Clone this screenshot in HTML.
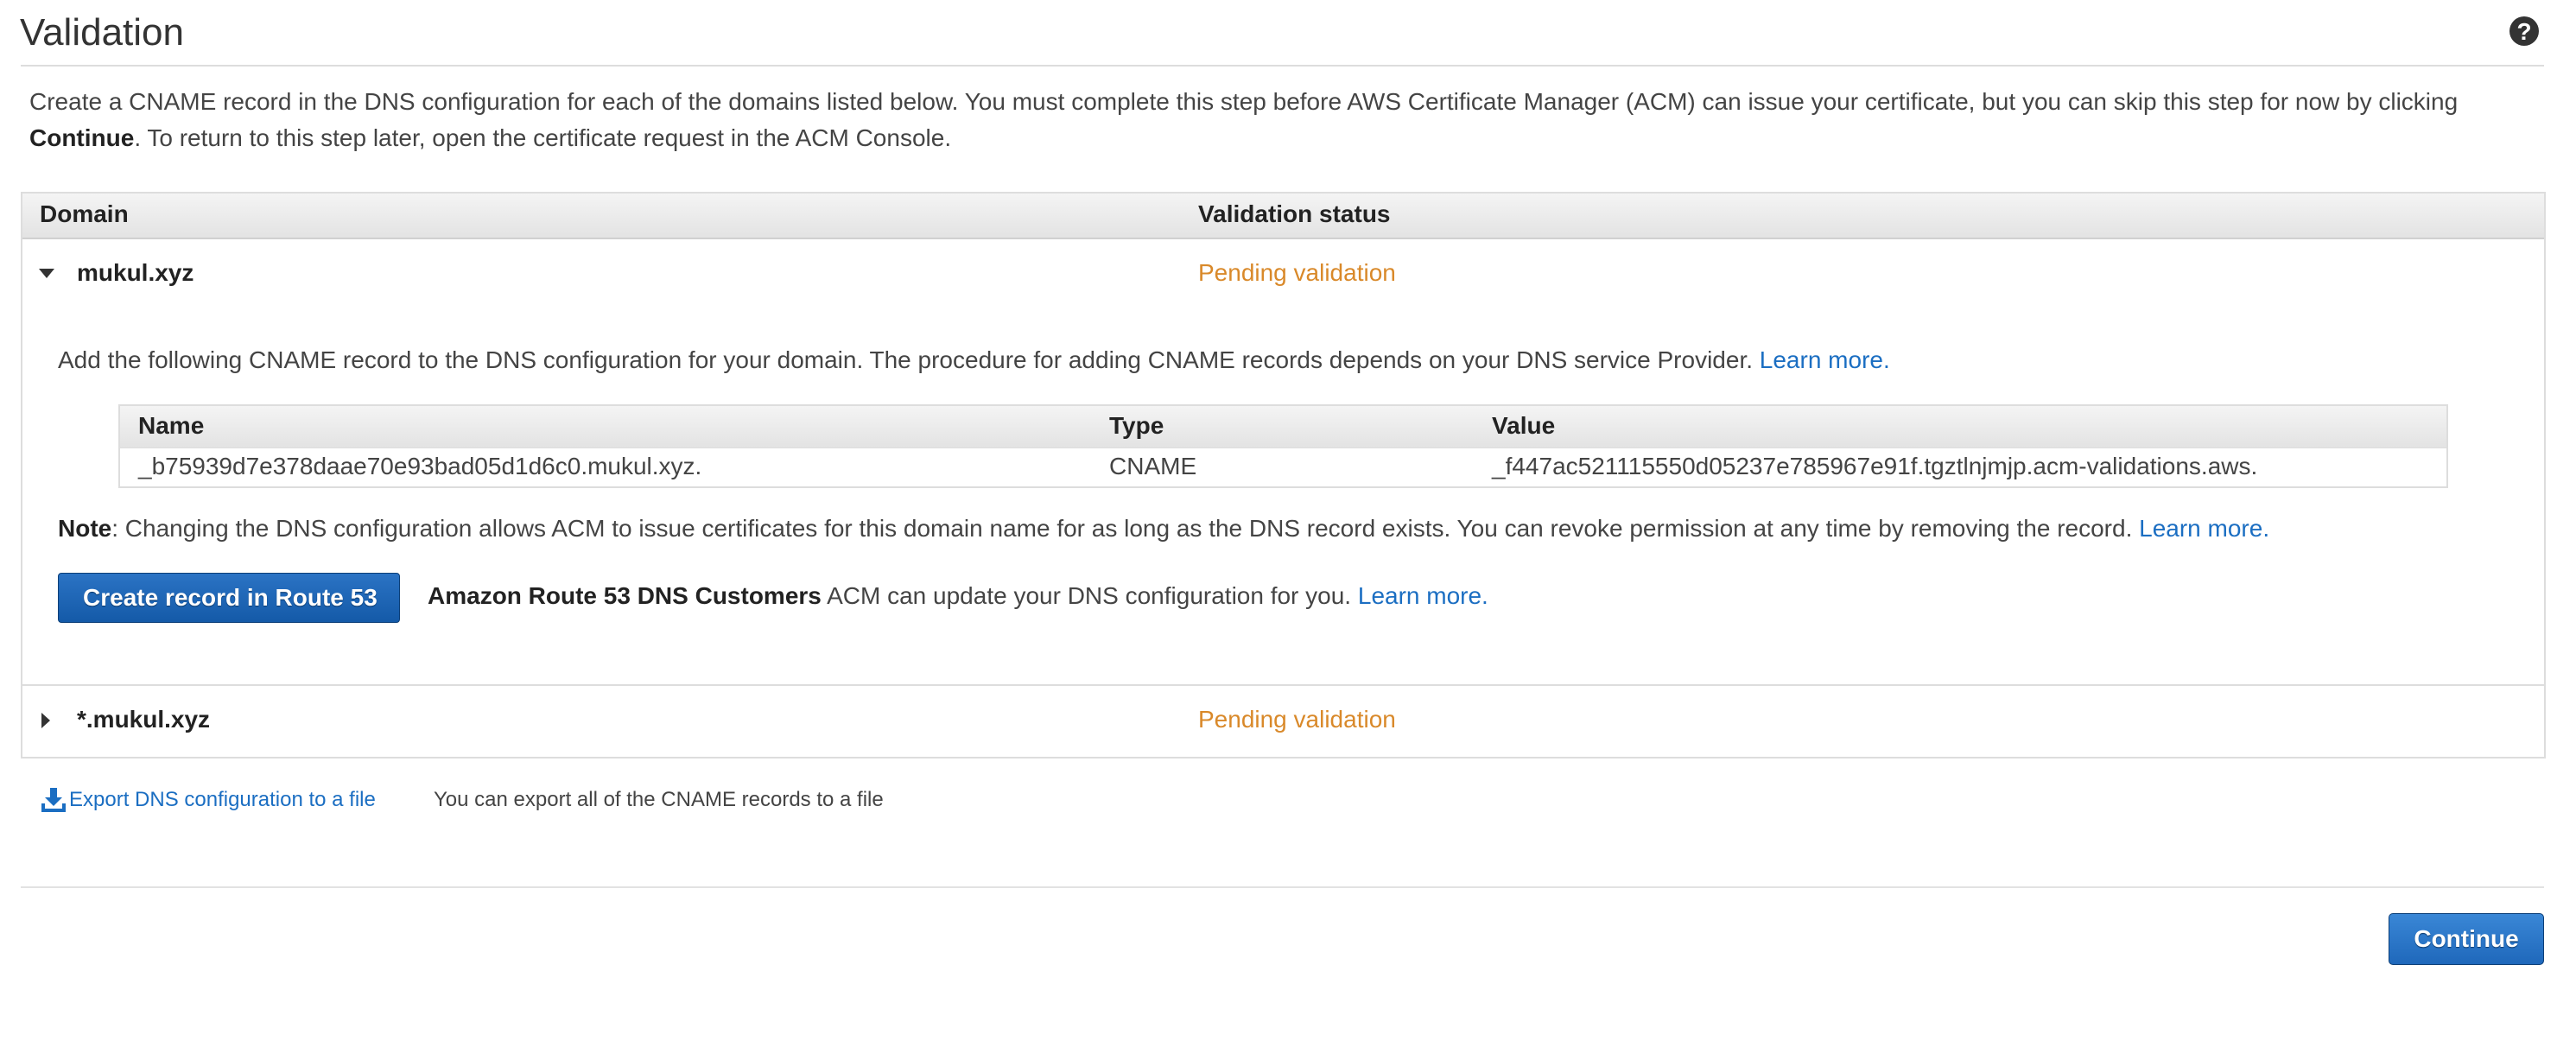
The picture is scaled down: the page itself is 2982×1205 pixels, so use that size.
<!DOCTYPE html>
<html><head><meta charset="utf-8"><style>
body{margin:0;width:2982px;height:1205px;background:#fff;font-family:"Liberation Sans",Arial,sans-serif;color:#444;position:relative;overflow:hidden}
.a{position:absolute;white-space:nowrap}
.t{font-size:28px;line-height:30px}
b{color:#222}
.lk{color:#1b6ec2}
.or{color:#d9892a}
.hdr{background:linear-gradient(#f4f4f4,#e3e3e3)}
</style></head><body>
<div class="a" style="left:23px;top:13px;font-size:44px;line-height:50px;color:#333">Validation</div>
<svg class="a" style="left:2904px;top:18px" width="36" height="36" viewBox="0 0 36 36"><circle cx="18" cy="18" r="17" fill="#333"/><text x="18" y="28" text-anchor="middle" font-family="Liberation Sans" font-weight="bold" font-size="28" fill="#fff">?</text></svg>
<div class="a" style="left:24px;top:75px;width:2921px;height:2px;background:#ddd"></div>
<div class="a t" style="left:34px;top:103px">Create a CNAME record in the DNS configuration for each of the domains listed below. You must complete this step before AWS Certificate Manager (ACM) can issue your certificate, but you can skip this step for now by clicking</div>
<div class="a t" style="left:34px;top:145px"><b>Continue</b>. To return to this step later, open the certificate request in the ACM Console.</div>

<div class="a" style="left:24px;top:222px;width:2919px;height:652px;border:2px solid #ddd"></div>
<div class="a hdr" style="left:26px;top:224px;width:2919px;height:51px;border-bottom:2px solid #d0d0d0"></div>
<div class="a t" style="left:46px;top:233px;font-weight:bold;color:#222">Domain</div>
<div class="a t" style="left:1387px;top:233px;font-weight:bold;color:#222">Validation status</div>

<svg class="a" style="left:45px;top:311px" width="18" height="12"><path d="M0 0H18L9 11Z" fill="#333"/></svg>
<div class="a t" style="left:89px;top:301px;font-weight:bold;color:#222">mukul.xyz</div>
<div class="a t or" style="left:1387px;top:301px">Pending validation</div>

<div class="a t" style="left:67px;top:402px">Add the following CNAME record to the DNS configuration for your domain. The procedure for adding CNAME records depends on your DNS service Provider. <span class="lk">Learn more.</span></div>

<div class="a" style="left:137px;top:468px;width:2693px;height:93px;border:2px solid #ddd"></div>
<div class="a hdr" style="left:139px;top:470px;width:2693px;height:48px;border-bottom:1px solid #ddd"></div>
<div class="a t" style="left:160px;top:478px;font-weight:bold;color:#222">Name</div>
<div class="a t" style="left:1284px;top:478px;font-weight:bold;color:#222">Type</div>
<div class="a t" style="left:1727px;top:478px;font-weight:bold;color:#222">Value</div>
<div class="a t" style="left:160px;top:525px">_b75939d7e378daae70e93bad05d1d6c0.mukul.xyz.</div>
<div class="a t" style="left:1284px;top:525px">CNAME</div>
<div class="a t" style="left:1727px;top:525px">_f447ac521115550d05237e785967e91f.tgztlnjmjp.acm-validations.aws.</div>

<div class="a t" style="left:67px;top:597px"><b>Note</b>: Changing the DNS configuration allows ACM to issue certificates for this domain name for as long as the DNS record exists. You can revoke permission at any time by removing the record. <span class="lk">Learn more.</span></div>

<div class="a" style="left:67px;top:663px;width:396px;height:58px;border:1px solid #0c3f78;border-radius:4px;background:linear-gradient(#2b73c4,#145aa8);box-sizing:border-box"></div>
<div class="a t" style="left:96px;top:677px;font-weight:bold;color:#fff;text-shadow:0 1px 1px #0a3565">Create record in Route 53</div>
<div class="a t" style="left:495px;top:675px"><b>Amazon Route 53 DNS Customers</b> ACM can update your DNS configuration for you. <span class="lk">Learn more.</span></div>

<div class="a" style="left:26px;top:792px;width:2919px;height:2px;background:#ddd"></div>
<svg class="a" style="left:48px;top:825px" width="11" height="18"><path d="M0 0V18L10 9Z" fill="#333"/></svg>
<div class="a t" style="left:89px;top:818px;font-weight:bold;color:#222">*.mukul.xyz</div>
<div class="a t or" style="left:1387px;top:818px">Pending validation</div>

<svg class="a" style="left:47px;top:911px" width="30" height="30" viewBox="0 0 30 30"><path d="M11 1H19V12H25L15 22L5 12H11Z" fill="#1b6ec2"/><path d="M1 19V29H29V19H25V25H5V19Z" fill="#1b6ec2"/></svg>
<div class="a lk" style="left:80px;top:912px;font-size:24px;line-height:28px">Export DNS configuration to a file</div>
<div class="a" style="left:502px;top:912px;font-size:24px;line-height:28px;color:#444">You can export all of the CNAME records to a file</div>

<div class="a" style="left:24px;top:1026px;width:2921px;height:2px;background:#e2e2e2"></div>
<div class="a" style="left:2765px;top:1057px;width:180px;height:60px;border:1px solid #0c3f78;border-radius:5px;background:linear-gradient(#3a87d6,#1f68bb);box-sizing:border-box;color:#fff;font-weight:bold;font-size:28px;line-height:58px;text-align:center;text-shadow:0 1px 1px #0a3565">Continue</div>
</body></html>
